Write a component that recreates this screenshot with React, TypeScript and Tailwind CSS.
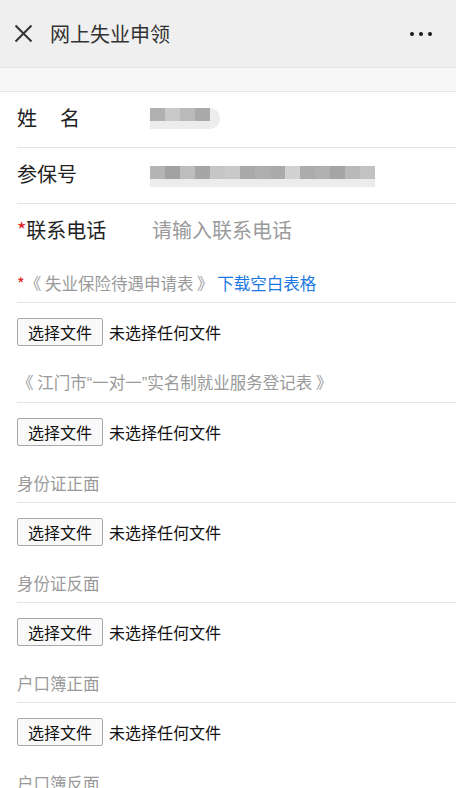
import React from "react";

const font = { fontFamily: '"Noto Sans CJK SC", "Noto Sans", sans-serif' };

function FileRow() {
  return (
    <div className="h-[57px] pl-[17px] pt-[15px] flex items-start">
      <div className="h-[28px] w-[86px] border border-[#a9a9a9] rounded-[2px] bg-[#f9f9f9] flex items-center justify-center text-[16px] leading-none text-[#111]">
        选择文件
      </div>
      <span className="ml-[6px] h-[28px] flex items-center text-[16px] leading-none text-[#111]">未选择任何文件</span>
    </div>
  );
}

function SectionHeader({ children }: { children: React.ReactNode }) {
  return (
    <div className="ml-[17px] h-[43px] border-b border-[#e6e6e6] flex items-end pb-[10px]">
      <div className="text-[16.5px] leading-[18px] text-[#9a9a9a] whitespace-nowrap">{children}</div>
    </div>
  );
}

const Q = ({ c }: { c: string }) => (
  <span style={{ fontFamily: '"Liberation Sans", sans-serif' }}>{c}</span>
);

const nameBlocks = ["#b0b0b0", "#c9c9c9", "#bababa", "#a9a9a9"];
const idBlocks = [
  "#b4b4b4", "#a2a2a2", "#bdbdbd", "#a6a6a6", "#c6c6c6", "#c9c9c9", "#a9a9a9", "#afafaf",
  "#ababab", "#d2d2d2", "#acacac", "#b0b0b0", "#a5a5a5", "#b9b9b9", "#c2c2c2",
];

function Blur({ blocks }: { blocks: string[] }) {
  return (
    <div className="flex flex-col">
      <div className="flex">
        {blocks.map((c, i) => (
          <div key={i} className="w-[15px] h-[13px]" style={{ backgroundColor: c }} />
        ))}
      </div>
      <div className="flex">
        {blocks.map((_, i) => (
          <div key={i} className="w-[15px] h-[8px] bg-[#ececec]" />
        ))}
      </div>
    </div>
  );
}

export default function App() {
  return (
    <div className="w-[456px] h-[788px] overflow-hidden bg-white" style={font}>
      {/* Header */}
      <div className="h-[67px] bg-[#efefef] flex items-center">
        <svg className="ml-[14px]" width="19" height="19" viewBox="0 0 19 19">
          <path d="M1.5 1.5 L17.5 17.5 M17.5 1.5 L1.5 17.5" stroke="#333" strokeWidth="2" fill="none" />
        </svg>
        <div className="ml-[17px] text-[20px] leading-none text-[#333]">网上失业申领</div>
        <div className="ml-auto mr-[24px] flex gap-[5px]">
          <span className="w-[4px] h-[4px] rounded-full bg-[#1a1a1a]" />
          <span className="w-[4px] h-[4px] rounded-full bg-[#1a1a1a]" />
          <span className="w-[4px] h-[4px] rounded-full bg-[#1a1a1a]" />
        </div>
      </div>
      <div className="h-[25px] bg-[#f7f7f7] border-t border-[#e3e3e3] border-b border-b-[#e6e6e6]" />

      {/* Rows */}
      <div className="ml-[17px] h-[56px] border-b border-[#e6e6e6] flex items-center">
        <div className="relative -top-[2px] w-[133px] text-[20px] leading-none text-[#222] flex">
          <span>姓</span>
          <span className="ml-[23px]">名</span>
        </div>
        <div className="relative -top-[1px] flex items-center">
          <Blur blocks={nameBlocks} />
          <div className="w-[10px] h-[21px] rounded-r-full bg-[#ededed]" />
        </div>
      </div>
      <div className="ml-[17px] h-[56px] border-b border-[#e6e6e6] flex items-center">
        <div className="relative -top-[2px] w-[133px] text-[20px] leading-none text-[#222]">参保号</div>
        <div className="relative top-[1px]">
          <Blur blocks={idBlocks} />
        </div>
      </div>
      <div className="ml-[17px] h-[56px] flex items-center">
        <div className="relative -top-[2px] w-[133px] text-[20px] leading-none text-[#222]">
          <span className="text-[#e02020]">*</span>联系电话
        </div>
        <div className="relative -top-[2px] ml-[2px] text-[20px] leading-none text-[#9a9a9a]">请输入联系电话</div>
      </div>

      <SectionHeader>
        <span className="text-[#e02020]">*</span>《 失业保险待遇申请表 》 <span className="text-[#1d78e3]">下载空白表格</span>
      </SectionHeader>
      <FileRow />
      <SectionHeader>
        《 江门市<Q c="“" />一对一<Q c="”" />实名制就业服务登记表 》
      </SectionHeader>
      <FileRow />
      <SectionHeader>身份证正面</SectionHeader>
      <FileRow />
      <SectionHeader>身份证反面</SectionHeader>
      <FileRow />
      <SectionHeader>户口簿正面</SectionHeader>
      <FileRow />
      <SectionHeader>户口簿反面</SectionHeader>
      <FileRow />
    </div>
  );
}
